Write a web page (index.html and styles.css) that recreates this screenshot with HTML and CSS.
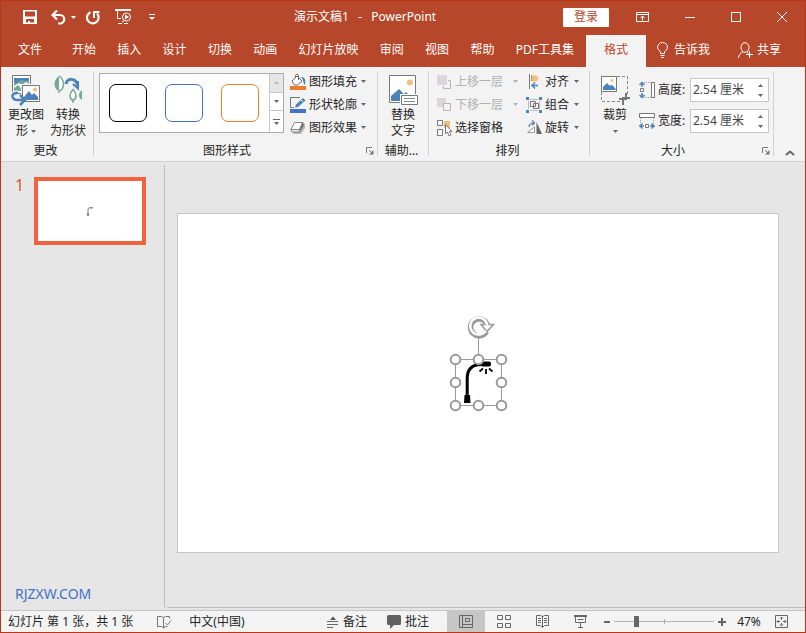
FILE: index.html
```html
<!DOCTYPE html>
<html lang="zh-CN">
<head>
<meta charset="utf-8">
<title>演示文稿1 - PowerPoint</title>
<link rel="stylesheet" href="styles.css">
</head>
<body>
<svg class="defs" aria-hidden="true">
  <symbol id="caret" viewBox="0 0 5 3"><path d="M0 0h5L2.500 3z" fill="currentColor"/></symbol>
  <symbol id="launch" viewBox="0 0 8 8"><path d="M.5 6V.5H6M3 3l3 3" fill="none" stroke="#777"/><path d="M7.500 3v4.500H3z" fill="#777"/></symbol>
</svg>

<header class="titlebar">
  <div class="quick">
    <button aria-label="保存"><svg width="14" height="14"><path fill="#fff" fill-rule="evenodd" d="M0 0h14v14H0zM2 1.500v5h10v-5zM3 9v3.500h2V11h2v1.500h4V9z"/></svg></button>
    <button class="undo" aria-label="撤消"><svg width="15" height="15"><path d="M2 5h7a4.200 4.200 0 0 1 0 8.500H7" fill="none" stroke="#fff" stroke-width="2.200"/><path d="M6 .5L1.500 5 6 9.500" fill="none" stroke="#fff" stroke-width="2.200"/></svg><svg class="caret"><use href="#caret"/></svg></button>
    <button class="redo" aria-label="恢复"><svg width="14" height="15"><path d="M4.500 2.200A5.800 5.800 0 1 0 11 3.500" fill="none" stroke="#fff" stroke-width="2.200"/><path d="M8 8V2h5.500" fill="none" stroke="#fff" stroke-width="2"/></svg></button>
    <button class="play" aria-label="从头开始"><svg width="17" height="16" fill="none" stroke="#fff"><path d="M0 1h16" stroke-width="2"/><path d="M2.500 2v7.500H6M8 11.500v2M3 14.500h4M9 14.500h4"/><circle cx="11.500" cy="8" r="4"/><path d="M10 5.500v5l4-2.500z" fill="#fff" stroke="none"/></svg></button>
    <button class="custom" aria-label="自定义快速访问工具栏"><svg width="6" height="7"><path d="M0 3h6L3 6z" fill="#fff"/><path d="M0 .5h6" stroke="#fff"/></svg></button>
  </div>
  <h1>演示文稿1&nbsp;&nbsp; -&nbsp;&nbsp; PowerPoint</h1>
  <div class="window-tools">
    <button class="login">登录</button>
    <button class="display" aria-label="功能区显示选项"><svg width="13" height="10" fill="none" stroke="#fff"><path d="M.5.500h12v9H.5zM.5 2.500h12M6.500 8.500V4M4.500 6l2-2 2 2"/></svg></button>
    <button aria-label="最小化"><svg width="10" height="10"><path d="M0 5.500h10" stroke="#fff"/></svg></button>
    <button aria-label="最大化"><svg width="10" height="10"><path d="M.5.500h9v9H.5z" fill="none" stroke="#fff"/></svg></button>
    <button aria-label="关闭"><svg width="10" height="10"><path d="M0 0l10 10M10 0L0 10" stroke="#fff"/></svg></button>
  </div>
</header>

<div class="tabbar">
  <nav class="tabs">
    <button class="file">文件</button>
    <div class="tab-list">
      <button>开始</button><button>插入</button><button>设计</button><button>切换</button><button>动画</button><button>幻灯片放映</button><button>审阅</button><button>视图</button><button>帮助</button><button>PDF工具集</button>
    </div>
    <button class="active">格式</button>
  </nav>
  <button class="tell"><svg width="11" height="16" fill="none" stroke="#fff"><path d="M3.500 11.500V10C2.500 8.500.6 7.500.6 5a4.900 4.500 0 0 1 9.800 0c0 2.500-1.900 3.500-2.900 5v1.500zM3.500 13.500h4M4 15.500h3"/></svg>告诉我</button>
  <button class="share"><svg width="16" height="17" fill="none" stroke="#fff"><ellipse cx="7" cy="5.500" rx="4" ry="4.800"/><path d="M.5 16c0-3 2-5 4.500-6M9 10l1.500 1M8 12.500h7M11.500 9v7"/></svg>共享</button>
</div>

<section class="ribbon">
  <div class="group">
    <div class="tools change">
      <button class="big">
        <svg width="30" height="32"><path d="M1.500.5h18v18h-18z" fill="#fff" stroke="#777"/><path d="M3 3h15v6l-3-2-4 3-3-2-5 3z" fill="#70a894"/><path d="M3 3h15v2l-4 1-4-1-4 3-3-1z" fill="#4a83b9"/><path d="M3 13l4-3 5 6H3z" fill="#70a894"/><path d="M10 9h20v20H10z" fill="#f3f3f3"/><path d="M11.500 10.500h17v16h-17z" fill="#fff" stroke="#777"/><circle cx="24" cy="14.500" r="2" fill="#eec07b"/><path d="M13 22l5-6 3 4 2-2 4 4v3H13z" fill="#4a83b9"/><path d="M7 18c-7-1-8 7 0 7h5" fill="none" stroke="#f3f3f3" stroke-width="5"/><path d="M7 18c-7-1-8 7 0 7h5M9 20l5 5-5 5" fill="none" stroke="#4a83b9" stroke-width="2.500"/></svg>
        <span>更改图</span>
        <span>形 <svg class="caret"><use href="#caret"/></svg></span>
      </button>
      <button class="big">
        <svg width="30" height="32"><path d="M6 1C0 5 0 14 6 16z" fill="#76a892"/><path d="M6 1c6 4 6 13 0 15v2" fill="#fff" stroke="#76a892" stroke-width="1.500"/><path d="M13 9c1-6 10-7 12 2" fill="none" stroke="#4a83b9" stroke-width="3"/><path d="M20 9l5 4.500V6" fill="none" stroke="#4a83b9" stroke-width="2"/><path d="M20 14.500c-4 4-4 9 0 11 4-2 4-7 0-11zM20 25v3" fill="#fff" stroke="#76a892" stroke-width="1.500"/><path d="M29 15c-4 3-4 8 0 10z" fill="#76a892"/></svg>
        <span>转换</span>
        <span>为形状</span>
      </button>
    </div>
    <div class="caption"><span>更改</span></div>
  </div>

  <div class="group">
    <div class="tools styles">
      <div class="gallery">
        <div class="swatches"><button class="swatch black" aria-label="黑色轮廓"></button><button class="swatch blue" aria-label="蓝色轮廓"></button><button class="swatch orange" aria-label="橙色轮廓"></button></div>
        <div class="scroller">
          <button class="off" aria-label="向上"><svg width="5" height="3"><path d="M0 3h5L2.500 0z" fill="#bbb"/></svg></button>
          <button aria-label="向下"><svg class="caret"><use href="#caret"/></svg></button>
          <button aria-label="其他"><svg width="7" height="6"><path d="M0 .5h7" stroke="#666"/><path d="M1 3h5L3.500 6z" fill="#666"/></svg></button>
        </div>
      </div>
      <div class="rows">
        <button class="row"><svg width="16" height="16"><path d="M0 12h16v4H0z" fill="#ed7d31"/><path d="M2 7l5-5 5 5-4.500 4h-3zM5.500 4V1.500c0-1.500 3-1.500 3 0V6" fill="#fff" stroke="#666"/><path d="M11 3c4 0 5 3 4 8-1-1-2-3-2-5z" fill="#4a83b9"/></svg><span>图形填充</span><svg class="caret"><use href="#caret"/></svg></button>
        <button class="row"><svg width="16" height="16"><path d="M0 12h16v4H0z" fill="#4472c4"/><path d="M10 .500H.5v10H4" fill="none" stroke="#777"/><path d="M5 10.500l1-3L13 1l2.500 2.500L8 10z" fill="#4a83b9"/><path d="M11 3l2 2" stroke="#f3f3f3"/></svg><span>形状轮廓</span><svg class="caret"><use href="#caret"/></svg></button>
        <button class="row"><svg width="16" height="16"><path d="M2 12l2 2h7l4-6V4l-3-2z" fill="#b5b5b5"/><path d="M9.500 12l4-6V3l-1-1-3 7z" fill="#666"/><path d="M4.500 2.500h8L9.500 9.500H1z" fill="#fff" stroke="#888"/><path d="M1 9.500h8.500V12H2L1 11z" fill="#eee" stroke="#888"/></svg><span>图形效果</span><svg class="caret"><use href="#caret"/></svg></button>
      </div>
    </div>
    <div class="caption"><span>图形样式</span><button class="launcher" aria-label="设置形状格式"><svg width="8" height="8"><use href="#launch"/></svg></button></div>
  </div>

  <div class="group">
    <div class="tools change">
      <button class="big">
        <svg width="30" height="32"><path d="M1.500.5h26v27h-26z" fill="#fff" stroke="#777"/><circle cx="22" cy="7.500" r="3" fill="#eec07b"/><path d="M3 26v-5l8-7 5 5 2-2 9 9z" fill="#4a83b9"/><path d="M12 19h18v12H12z" fill="#fff"/><path d="M13.500 20.500h16v9h-16z" fill="#fff" stroke="#777"/><path d="M16 23.500h11M16 26.500h11" stroke="#888"/></svg>
        <span>替换</span>
        <span>文字</span>
      </button>
    </div>
    <div class="caption"><span>辅助...</span></div>
  </div>

  <div class="group">
    <div class="tools arrange">
      <div class="rows">
        <button class="row" disabled><svg width="16" height="16"><path d="M1 1h10v10H1z" fill="#dcd6dc"/><path d="M12 6.500h2.500v8H7.500V12" fill="none" stroke="#b8b4b8"/></svg><span>上移一层</span><svg class="caret"><use href="#caret"/></svg></button>
        <button class="row" disabled><svg width="16" height="16"><path d="M1 1h9v9H1z" fill="#dcd6dc"/><path d="M7.500 6.500h7v7h-7z" fill="#f7f0f7" stroke="#b8b4b8"/></svg><span>下移一层</span><svg class="caret"><use href="#caret"/></svg></button>
        <button class="row"><svg width="16" height="16"><path d="M8 1h6v7H8z" fill="#eec07b"/><path d="M1.500.500h5v5h-5zM1.500 9.500h5v6h-5z" fill="#fff" stroke="#777"/><path d="M9.500 4.500v9l2-1.500 1.500 4 2-1-1.500-3.500h2.500z" fill="#fff" stroke="#777"/></svg><span>选择窗格</span></button>
      </div>
      <div class="rows">
        <button class="row"><svg width="16" height="16"><path d="M3.500 0v15" stroke="#777"/><path d="M5.500 1.500h5v6h-5z" fill="#eec07b"/><path d="M5 2.500h7v4H5z" fill="#eec07b"/><path d="M5.500 1v6" stroke="#999"/><path d="M12 11.500H6M9 8.500l-3 3 3 3" fill="none" stroke="#4a83b9" stroke-width="1.500"/></svg><span>对齐</span><svg class="caret"><use href="#caret"/></svg></button>
        <button class="row"><svg width="16" height="16"><path d="M2.500 2.500h11v11h-11z" fill="none" stroke="#bbb"/><path d="M4.500 4.500h5v5h-5zM7.500 6.500h5v5h-5z" fill="none" stroke="#777"/><path d="M0 0h4v4H0zM12 0h4v4h-4zM0 12h4v4H0zM12 12h4v4h-4z" fill="#f3f3f3"/><path d="M0 0h3v3H0zM13 0h3v3h-3zM0 13h3v3H0zM13 13h3v3h-3z" fill="#4a83b9"/></svg><span>组合</span><svg class="caret"><use href="#caret"/></svg></button>
        <button class="row"><svg width="16" height="16"><path d="M10.500 2v12H16z" fill="#666"/><path d="M1.500 12.500L8.500 7v5.500z" fill="#fff" stroke="#999"/><path d="M3 7c0-3 2-4 5-4M6 .500L8.500 3 6 5.500" fill="none" stroke="#4a83b9" stroke-width="1.200"/></svg><span>旋转</span><svg class="caret"><use href="#caret"/></svg></button>
      </div>
    </div>
    <div class="caption"><span>排列</span></div>
  </div>

  <div class="group">
    <div class="tools size">
      <button class="big">
        <svg width="30" height="32"><path d="M17 1.500h10.500V20M1.500 17v9.500H20" fill="none" stroke="#888" stroke-dasharray="3 2"/><path d="M1.500 1.500h15v15h-15z" fill="#fff" stroke="#777"/><circle cx="12" cy="5.500" r="1.500" fill="#eec07b"/><path d="M3 15v-3l4-4 3 3 1.500-1.500 4 4V15z" fill="#4a83b9"/><path d="M19 24h7v-6M23 30v-7h7" fill="none" stroke="#777" stroke-width="2"/></svg>
        <span>裁剪</span>
        <span><svg class="caret"><use href="#caret"/></svg></span>
      </button>
      <div class="fields">
        <div class="field"><svg width="17" height="18"><path d="M5 1.500h7M5 16.500h7" stroke="#999" stroke-dasharray="1 1"/><path d="M12.500 1.500h3v15h-3zM1.500 7.500h3v3h-3z" fill="#fff" stroke="#777"/><path d="M3 1v5M.5 4L3 1.500 5.500 4M3 17v-5M.5 14L3 16.500 5.500 14" fill="none" stroke="#4a83b9" stroke-width="1.500"/></svg><label for="height">高度:</label><div class="spin"><input id="height" type="text" value="2.54 厘米"><div class="steps"><button aria-label="增加高度"><svg width="5" height="3"><path d="M0 3h5L2.500 0z" fill="#666"/></svg></button><button aria-label="减少高度"><svg class="caret"><use href="#caret"/></svg></button></div></div></div>
        <div class="field"><svg width="17" height="18"><path d="M1.500 6v6M14.500 6v6" stroke="#999" stroke-dasharray="1 1"/><path d="M.5 1.500h15v4H.5zM6.500 12.500h3v3h-3z" fill="#fff" stroke="#777"/><path d="M0 14h5M3.500 11.500L1 14l2.500 2.500M16 14h-5M12.500 11.500L15 14l-2.500 2.500" fill="none" stroke="#4a83b9" stroke-width="1.500"/></svg><label for="width">宽度:</label><div class="spin"><input id="width" type="text" value="2.54 厘米"><div class="steps"><button aria-label="增加宽度"><svg width="5" height="3"><path d="M0 3h5L2.500 0z" fill="#666"/></svg></button><button aria-label="减少宽度"><svg class="caret"><use href="#caret"/></svg></button></div></div></div>
      </div>
    </div>
    <div class="caption"><span>大小</span><button class="launcher" aria-label="大小和位置"><svg width="8" height="8"><use href="#launch"/></svg></button></div>
  </div>
  <button class="collapse" aria-label="折叠功能区"><svg width="10" height="6"><path d="M1 5l4-3.500L9 5" fill="none" stroke="#666" stroke-width="2"/></svg></button>
</section>

<main class="workspace">
  <aside class="outline">
    <div class="slide-item">
      <span class="number">1</span>
      <button class="thumb" aria-label="幻灯片 1"><svg width="8" height="10"><path d="M2 9.500V4q0-2.500 3-2.500" fill="none" stroke="#999" stroke-width="1.200"/><path d="M1 7h2v3H1zM4 1h3v1.500H4z" fill="#888"/></svg></button>
    </div>
    <p class="site">RJZXW.COM</p>
  </aside>
  <div class="canvas">
    <div class="slide">
      <svg class="lamp" width="80" height="115" viewBox="440 305 80 115">
        <path d="M467.200 397v-18.500q0-14 14-14" fill="none" stroke="#000" stroke-width="3"/>
        <path d="M464.500 395h5.500l.5 8h-6.500z"/><path d="M482 361.500h7q2 0 2 2v1q0 2-2 2h-6q-2 0-2-1z"/>
        <path d="M483 368.500l-3.500 3M486 369v5M489 368.500l3.500 3" stroke="#000" stroke-width="1.800"/>
        <path d="M478.500 335v25M455.500 359.500h46v46h-46z" fill="none" stroke="#999"/>
        <path d="M486.500 331.500A8.500 8.500 0 1 1 487.200 325" fill="none" stroke="#999" stroke-width="5.500"/>
        <path d="M481 324.500h12.500l-6.500 7z" fill="#fff" stroke="#999" stroke-width="1.500"/>
        <path d="M485.800 330.800A8.500 8.500 0 1 1 487.200 325.300" fill="none" stroke="#fff" stroke-width="2.500"/>
        <g fill="#fff" stroke="#999" stroke-width="2"><circle cx="455.500" cy="359.500" r="4.800"/><circle cx="478.500" cy="359.500" r="4.800"/><circle cx="501.500" cy="359.500" r="4.800"/><circle cx="455.500" cy="382.500" r="4.800"/><circle cx="501.500" cy="382.500" r="4.800"/><circle cx="455.500" cy="405.500" r="4.800"/><circle cx="478.500" cy="405.500" r="4.800"/><circle cx="501.500" cy="405.500" r="4.800"/></g>
      </svg>
    </div>
  </div>
</main>

<footer class="status">
  <span>幻灯片 第 1 张，共 1 张</span>
  <button class="spell" aria-label="拼写检查"><svg width="15" height="14" fill="none" stroke="#777"><path d="M6.500 12.500v-10l-2-1H.5v10h4zl2-1h2M6.500 2.500l2-1h4v2M7 13.500v-2M8.500 8l2 2L14 5.500"/></svg></button>
  <button class="lang">中文(中国)</button>
  <div class="status-right">
    <button class="note"><svg width="12" height="12"><path d="M3 4h6L6 .500z" fill="#555"/><path d="M0 5.500h11M0 8.500h11M0 11.500h6" stroke="#666"/></svg>备注</button>
    <button class="comment"><svg width="14" height="14"><path d="M1.500 0h11q1.500 0 1.500 1.500v7q0 1.500-1.500 1.500H7l-4 4v-4H1.500Q0 10 0 8.500v-7Q0 0 1.500 0z" fill="#606060"/></svg>批注</button>
    <div class="views">
      <button class="current" aria-label="普通视图"><svg width="14" height="13" fill="none" stroke="#666"><path d="M.5.500h13v12H.5zM3.500.500v12M4 9.500h9M6.500 3.500h4v3h-4z"/></svg></button>
      <button aria-label="幻灯片浏览"><svg width="14" height="13" fill="none" stroke="#666"><path d="M.5.500h5v4h-5zM8.500.500h5v4h-5zM.5 8.500h5v4h-5zM8.500 8.500h5v4h-5z"/></svg></button>
      <button aria-label="阅读视图"><svg width="13" height="13" fill="none" stroke="#666"><path d="M.5.500h4l2 1 2-1h4v10h-4l-2 2-2-2h-4zM6.500 1v11M2 3.500h3M2 5.500h3M2 7.500h3M8 3.500h3M8 5.500h3M8 7.500h3"/></svg></button>
      <button aria-label="幻灯片放映"><svg width="13" height="13" fill="none" stroke="#666"><path d="M0 1h13" stroke-width="2"/><path d="M1.500 1v6.500h10V1M3.500 4.500h6M6.500 8v4M4 12.500h5"/></svg></button>
    </div>
    <div class="zoom">
      <button aria-label="缩小"><svg width="6" height="8"><path d="M0 4h6" stroke="#666" stroke-width="2"/></svg></button>
      <input type="range" min="0" max="100" value="21" aria-label="缩放">
      <button aria-label="放大"><svg width="8" height="8"><path d="M0 4h8M4 0v8" stroke="#666" stroke-width="2"/></svg></button>
    </div>
    <button class="percent">47%</button>
    <button aria-label="使幻灯片适应当前窗口"><svg width="13" height="13" fill="none" stroke="#666"><path d="M.5.500h12v12H.5z"/><path d="M6.500 2v3M6.500 8v3M2 6.500h3M8 6.500h3M5 3.500l1.500-1.500L8 3.500M5 9.500L6.500 11 8 9.500M3.500 5L2 6.500 3.500 8M9.500 5L11 6.500 9.500 8"/></svg></button>
  </div>
</footer>
</body>
</html>
```
FILE: styles.css
```css
* { box-sizing: border-box; }

body {
  margin: 0;
  height: 100vh;
  display: flex;
  flex-direction: column;
  border: 1px solid #bd3519;
  background: #e6e6e6;
  color: #262626;
  font: 12px/16px "Noto Sans", "Noto Sans CJK SC", sans-serif;
}

button {
  margin: 0;
  padding: 0;
  border: 0;
  background: none;
  color: inherit;
  font: inherit;
  white-space: nowrap;
}

svg { display: block; flex: none; }
.defs { display: none; }
.caret { width: 5px; height: 3px; color: #666; }

/* Title bar */
.titlebar {
  display: grid;
  grid-template-columns: 1fr auto 1fr;
  align-items: center;
  height: 34px;
  padding: 0 18px 2px 22px;
  background: #b7472a;
  color: #fff;
}
.titlebar h1 { margin: 0; padding-right: 80px; font: inherit; }
.titlebar .caret { color: #fff; }
.quick { display: flex; align-items: center; }
.undo { display: flex; align-items: center; gap: 5px; margin-left: 14px; }
.redo { margin-left: 10px; }
.play { margin-left: 15px; }
.custom { margin-left: 17px; }
.window-tools { display: flex; align-items: center; justify-self: end; }
.window-tools button { margin-left: 36px; }
.window-tools .display { margin-left: 27px; }
.window-tools .login { width: 46px; height: 19px; margin: 0; border-radius: 1px; background: #fff; color: #b7472a; }

/* Tabs */
.tabbar { display: flex; height: 32px; background: #b7472a; color: #fff; }
.tabbar button { padding-bottom: 2px; }
.tabs { display: flex; flex: 1; }
.file { width: 58px; }
.tab-list { display: flex; flex: 1; justify-content: space-between; padding: 0 12px 0 13px; }
.active { width: 60px; background: #f3f3f3; color: #b7472a; }
.tell, .share { display: flex; align-items: center; gap: 6px; }
.tell { margin-left: 11px; }
.share { gap: 3px; margin: 0 24px 0 28px; }

/* Ribbon */
.ribbon { display: flex; border-bottom: 1px solid #d0d0d0; background: #f3f3f3; }
.group {
  position: relative;
  display: flex;
  flex-direction: column;
  padding-top: 3px;
}
.group::after {
  content: "";
  position: absolute;
  top: 4px;
  right: 0;
  bottom: 5px;
  width: 1px;
  background: #d2d2d2;
}
.tools { display: flex; height: 69px; }
.caption { display: flex; align-items: center; height: 22px; padding: 2px 4px 0 0; }
.caption span { flex: 1; text-align: center; }
.launcher { margin-left: 6px; }
.change { gap: 6px; padding: 0 8px 0 7px; }
.big {
  display: flex;
  flex-direction: column;
  align-items: center;
  width: 36px;
  padding-top: 5px;
}
.big .caret { display: inline-block; vertical-align: middle; }
.styles { gap: 6px; padding: 0 12px 0 5px; }
.gallery { display: flex; height: 60px; margin-top: 3px; border: 1px solid #ababab; background: #fff; }
.swatches { display: flex; align-items: center; gap: 18px; padding: 0 10px 0 9px; }
.swatch { width: 38px; height: 38px; border: 1px solid; border-radius: 7px; background: #fff; }
.black { border-color: #000; }
.blue { border-color: #4472c4; }
.orange { border-color: #ed7d31; }
.scroller { display: grid; width: 14px; border-left: 1px solid #c6c6c6; }
.scroller button { display: flex; align-items: center; justify-content: center; border-top: 1px solid #c6c6c6; }
.scroller .off { border-top: 0; background: #e6e6e6; }
.rows { display: flex; flex-direction: column; }
.row { display: flex; align-items: center; gap: 3px; height: 23px; }
.row .caret { margin-left: auto; }
.row:disabled, .row:disabled .caret { color: #b1b1b1; }
.styles .rows { width: 76px; }
.arrange { gap: 8px; padding: 0 11px 0 7px; }
.arrange .rows:first-child { width: 82px; }
.arrange .rows:last-child { width: 53px; }
.size { gap: 6px; padding: 0 5px 0 7px; }
.fields { display: flex; flex-direction: column; gap: 7px; padding-top: 8px; }
.field { display: flex; align-items: center; gap: 2px; }
.field label { width: 30px; }
.spin { display: flex; width: 79px; height: 24px; border: 1px solid #c6c6c6; background: #fff; }
.spin input { flex: 1; min-width: 0; padding: 0 2px; border: 0; background: none; color: #444; font: inherit; }
.steps { display: grid; width: 15px; padding: 1px 0; }
.steps button { display: flex; align-items: center; justify-content: center; }
.collapse { margin: auto 10px 5px auto; }

/* Workspace */
.workspace { display: flex; flex: 1; min-height: 0; }
.outline {
  display: flex;
  flex-direction: column;
  justify-content: space-between;
  width: 164px;
  margin: 3px 0 2px;
  padding: 12px 18px 4px 14px;
  border-right: 1px solid #bdbdbd;
}
.slide-item { display: flex; justify-content: space-between; }
.number { color: #d9583b; font-size: 16px; }
.thumb {
  display: flex;
  align-items: center;
  justify-content: center;
  width: 112px;
  height: 68px;
  border: 4px solid #f0633e;
  background: #fff;
}
.site { margin: 0; color: #4472c4; font-size: 14px; line-height: 20px; }
.canvas {
  display: flex;
  flex: 1;
  align-items: center;
  margin: 0 0 2px 2px;
  padding: 0 26px 3px 10px;
  border-bottom: 1px solid #bdbdbd;
}
.slide { position: relative; flex: 1; aspect-ratio: 602 / 340; border: 1px solid #c6c6c6; background: #fff; }
.lamp { position: absolute; top: calc(50% - 78px); left: calc(50% - 38px); }

/* Status bar */
.status { display: flex; align-items: center; height: 22px; padding: 0 17px 0 7px; border-top: 1px solid #c6c6c6; background: #f3f3f3; }
.spell { margin-left: 24px; }
.lang { margin-left: 17px; }
.status-right { display: flex; align-items: center; align-self: stretch; margin-left: auto; }
.note, .comment { display: flex; align-items: center; gap: 4px; }
.comment { margin-left: 20px; }
.views { display: flex; align-self: stretch; margin-left: 18px; }
.views button { display: flex; align-items: center; justify-content: center; width: 38px; }
.views .current { background: #c6c6c6; }
.zoom { display: flex; align-items: center; gap: 4px; margin-left: 5px; }
.zoom input {
  width: 100px;
  height: 16px;
  margin: 0;
  appearance: none;
  background:
    linear-gradient(#aaa, #aaa) center / 1px 5px no-repeat,
    linear-gradient(#b5b5b5, #b5b5b5) center / 100% 1px no-repeat;
}
.zoom input::-webkit-slider-thumb { appearance: none; width: 5px; height: 11px; background: #666; }
.percent { width: 26px; margin: 0 13px 0 10px; }
```
